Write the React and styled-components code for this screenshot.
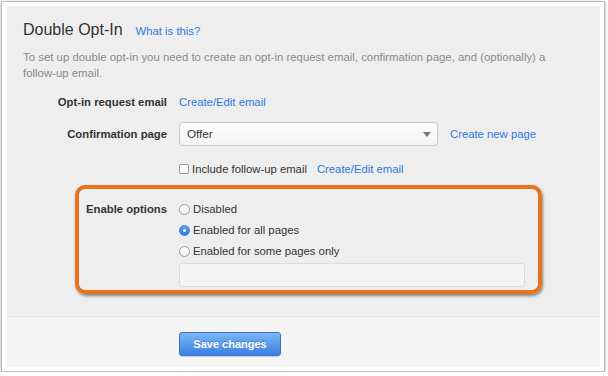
import styled, { createGlobalStyle } from "styled-components";

const GlobalStyle = createGlobalStyle`
  html, body {
    margin: 0;
    padding: 0;
    background: #ffffff;
  }
  body {
    font-family: "Liberation Sans", Arial, Helvetica, sans-serif;
    color: #333333;
  }
`;

export default function App() {
  return (
    <>
      <GlobalStyle />
      <Frame>
        <Panel>
          <Main>
            <TitleRow>
              <Title>Double Opt-In</Title>
              <Link href="#">What is this?</Link>
            </TitleRow>
            <Description>
              To set up double opt-in you need to create an opt-in request email, confirmation page,
              and (optionally) a follow-up email.
            </Description>

            <FormRow $width={144} $top={11}>
              <Label>Opt-in request email</Label>
              <Field>
                <Link href="#">Create/Edit email</Link>
              </Field>
            </FormRow>

            <FormRow $width={144} $top={10}>
              <Label>Confirmation page</Label>
              <Field>
                <Select>
                  <span>Offer</span>
                  <Arrow />
                </Select>
                <Link href="#" $gap={12}>Create new page</Link>
              </Field>
            </FormRow>

            <FormRow $width={144} $top={13}>
              <Label />
              <Field>
                <Check>
                  <Box />
                  Include follow-up email
                </Check>
                <Link href="#" $gap={10}>Create/Edit email</Link>
              </Field>
            </FormRow>

            <Highlight>
              <FormRow $width={88}>
                <Label>Enable options</Label>
                <Field>
                  <Radio>
                    <Dot />
                    Disabled
                  </Radio>
                </Field>
              </FormRow>
              <FormRow $width={88}>
                <Label />
                <Field>
                  <Radio>
                    <Dot $on />
                    Enabled for all pages
                  </Radio>
                </Field>
              </FormRow>
              <FormRow $width={88}>
                <Label />
                <Field>
                  <Radio>
                    <Dot />
                    Enabled for some pages only
                  </Radio>
                </Field>
              </FormRow>
              <FormRow $width={88} $top={1}>
                <Label />
                <Field>
                  <TextInput />
                </Field>
              </FormRow>
            </Highlight>
          </Main>
          <Footer>
            <SaveButton>Save changes</SaveButton>
          </Footer>
        </Panel>
      </Frame>
    </>
  );
}

const Frame = styled.div`
  box-sizing: border-box;
  margin: 1px 0 0 1px;
  width: 604px;
  height: 371px;
  padding: 4px 4px 4px 5px;
  background: #ffffff;
  border: 1px solid #bdbdbd;
  box-shadow: 0 1px 3px rgba(0, 0, 0, 0.35);
`;

const Panel = styled.div`
  display: flex;
  flex-direction: column;
  height: 100%;
`;

const Main = styled.div`
  box-sizing: border-box;
  height: 311px;
  padding: 14px 15px 0 16px;
  background: #eeeeee;
  border-bottom: 1px solid #dedede;
`;

const TitleRow = styled.div`
  display: flex;
  align-items: baseline;
  line-height: 20px;
`;

const Title = styled.h1`
  margin: 0 13px 0 0;
  font-size: 16px;
  font-weight: normal;
  color: #333333;
`;

const Link = styled.a`
  margin-left: ${(p) => p.$gap || 0}px;
  font-size: 11.3px;
  color: #2f78dc;
  text-decoration: none;
  white-space: nowrap;
`;

const Description = styled.p`
  max-width: 540px;
  margin: 8px 0 0;
  font-size: 11.4px;
  line-height: 16px;
  color: #8a8a8a;
`;

const FormRow = styled.div`
  display: flex;
  align-items: center;
  gap: 12px;
  min-height: 20px;
  margin-top: ${(p) => p.$top || 0}px;
  line-height: 20px;

  & > :first-child {
    width: ${(p) => p.$width}px;
  }
`;

const Label = styled.div`
  flex-shrink: 0;
  text-align: right;
  font-size: 11.3px;
  font-weight: bold;
  color: #333333;
`;

const Field = styled.div`
  display: flex;
  align-items: center;
  font-size: 11.3px;
  color: #333333;
`;

const Select = styled.div`
  box-sizing: border-box;
  display: flex;
  align-items: center;
  justify-content: space-between;
  width: 259px;
  height: 24px;
  padding: 0 6px 0 7px;
  border: 1px solid #c9c9c9;
  border-radius: 4px;
  background: linear-gradient(#ffffff, #f3f3f3);
  font-size: 11.6px;
`;

const Arrow = styled.span`
  width: 0;
  height: 0;
  border-left: 4.5px solid transparent;
  border-right: 4.5px solid transparent;
  border-top: 5px solid #777777;
`;

const Check = styled.label`
  display: flex;
  align-items: center;
  gap: 3px;
`;

const Box = styled.span`
  box-sizing: border-box;
  width: 10px;
  height: 10px;
  border: 1px solid #9a9a9a;
  border-radius: 2px;
  background: #ffffff;
`;

const Highlight = styled.div`
  box-sizing: border-box;
  width: 467px;
  margin: 6px 0 0 52px;
  padding: 10px 0 3px 0;
  border: 4px solid #e7731f;
  border-radius: 10px;
  box-shadow: 1px 2px 3px rgba(0, 0, 0, 0.45);

  & > div {
    line-height: 21px;
  }
`;

const Radio = styled.label`
  display: flex;
  align-items: center;
  gap: 3px;
  line-height: 21px;
`;

const Dot = styled.span`
  position: relative;
  box-sizing: border-box;
  width: 11px;
  height: 11px;
  border-radius: 50%;
  border: 1px solid ${(p) => (p.$on ? "#2f7fe0" : "#9a9a9a")};
  background: ${(p) => (p.$on ? "linear-gradient(#5fa6f3, #2c7ae0)" : "linear-gradient(#ffffff, #f2f2f2)")};

  &::after {
    content: "";
    display: ${(p) => (p.$on ? "block" : "none")};
    position: absolute;
    left: 3px;
    top: 3px;
    width: 3px;
    height: 3px;
    border-radius: 50%;
    background: #ffffff;
  }
`;

const TextInput = styled.div`
  box-sizing: border-box;
  width: 346px;
  height: 24px;
  border: 1px solid #dcdcdc;
  border-radius: 3px;
  background: #f4f4f4;
`;

const Footer = styled.div`
  flex: 1;
  padding: 15px 0 0 172px;
  background: #f4f4f4;
`;

const SaveButton = styled.button`
  box-sizing: border-box;
  width: 102px;
  height: 24px;
  padding: 0;
  border: 1px solid #3c73c9;
  border-radius: 3px;
  background: linear-gradient(#7ab8f6, #3b7fe2);
  color: #ffffff;
  font-family: "Liberation Sans", Arial, Helvetica, sans-serif;
  font-size: 11px;
  font-weight: bold;
  text-shadow: 0 -1px 0 rgba(0, 0, 0, 0.2);
  box-shadow: 0 1px 1px rgba(0, 0, 0, 0.15);
`;
